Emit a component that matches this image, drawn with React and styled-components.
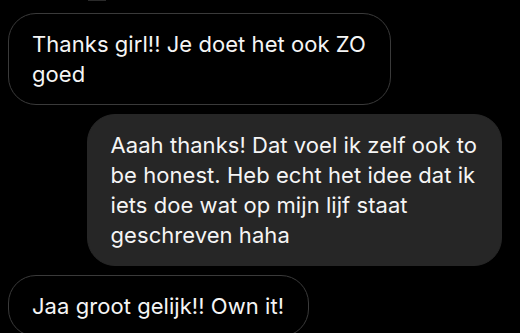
import React from 'react'
import styled, { createGlobalStyle } from 'styled-components'

const GlobalStyle = createGlobalStyle`
  html, body {
    margin: 0;
    padding: 0;
    background: #000;
    overflow: hidden;
  }
  body {
    font-family: Inter, 'Noto Sans', sans-serif;
    -webkit-font-smoothing: antialiased;
  }
`

const Thread = styled.div`
  display: flex;
  flex-direction: column;
  gap: 9px;
  padding: 13px 18px 0 8px;
  height: 333px;
  box-sizing: border-box;
  position: relative;
`

const TopNub = styled.div`
  position: absolute;
  top: 0;
  left: 88px;
  width: 18px;
  height: 1px;
  background: #2a2a2a;
`

const Row = styled.div`
  display: flex;
  justify-content: ${({ mine }) => (mine ? 'flex-end' : 'flex-start')};
`

const Bubble = styled.div`
  box-sizing: border-box;
  padding: 15px 24px 15px 23px;
  border-radius: 28px;
  font-size: 22px;
  line-height: 30px;
  letter-spacing: 0.05px;
  color: #f5f5f5;
  white-space: nowrap;
  background: ${({ mine }) => (mine ? '#262626' : '#000')};
  border: 1px solid ${({ mine }) => (mine ? '#262626' : '#3a3a3a')};
`

export default function App() {
  return (
    <>
      <GlobalStyle />
      <Thread>
        <TopNub />
        <Row>
          <Bubble>
            Thanks girl!! Je doet het ook ZO
            <br />
            goed
          </Bubble>
        </Row>
        <Row mine>
          <Bubble mine>
            Aaah thanks! Dat voel ik zelf ook to
            <br />
            be honest. Heb echt het idee dat ik
            <br />
            iets doe wat op mijn lijf staat
            <br />
            geschreven haha
          </Bubble>
        </Row>
        <Row>
          <Bubble>Jaa groot gelijk!! Own it!</Bubble>
        </Row>
      </Thread>
    </>
  )
}
